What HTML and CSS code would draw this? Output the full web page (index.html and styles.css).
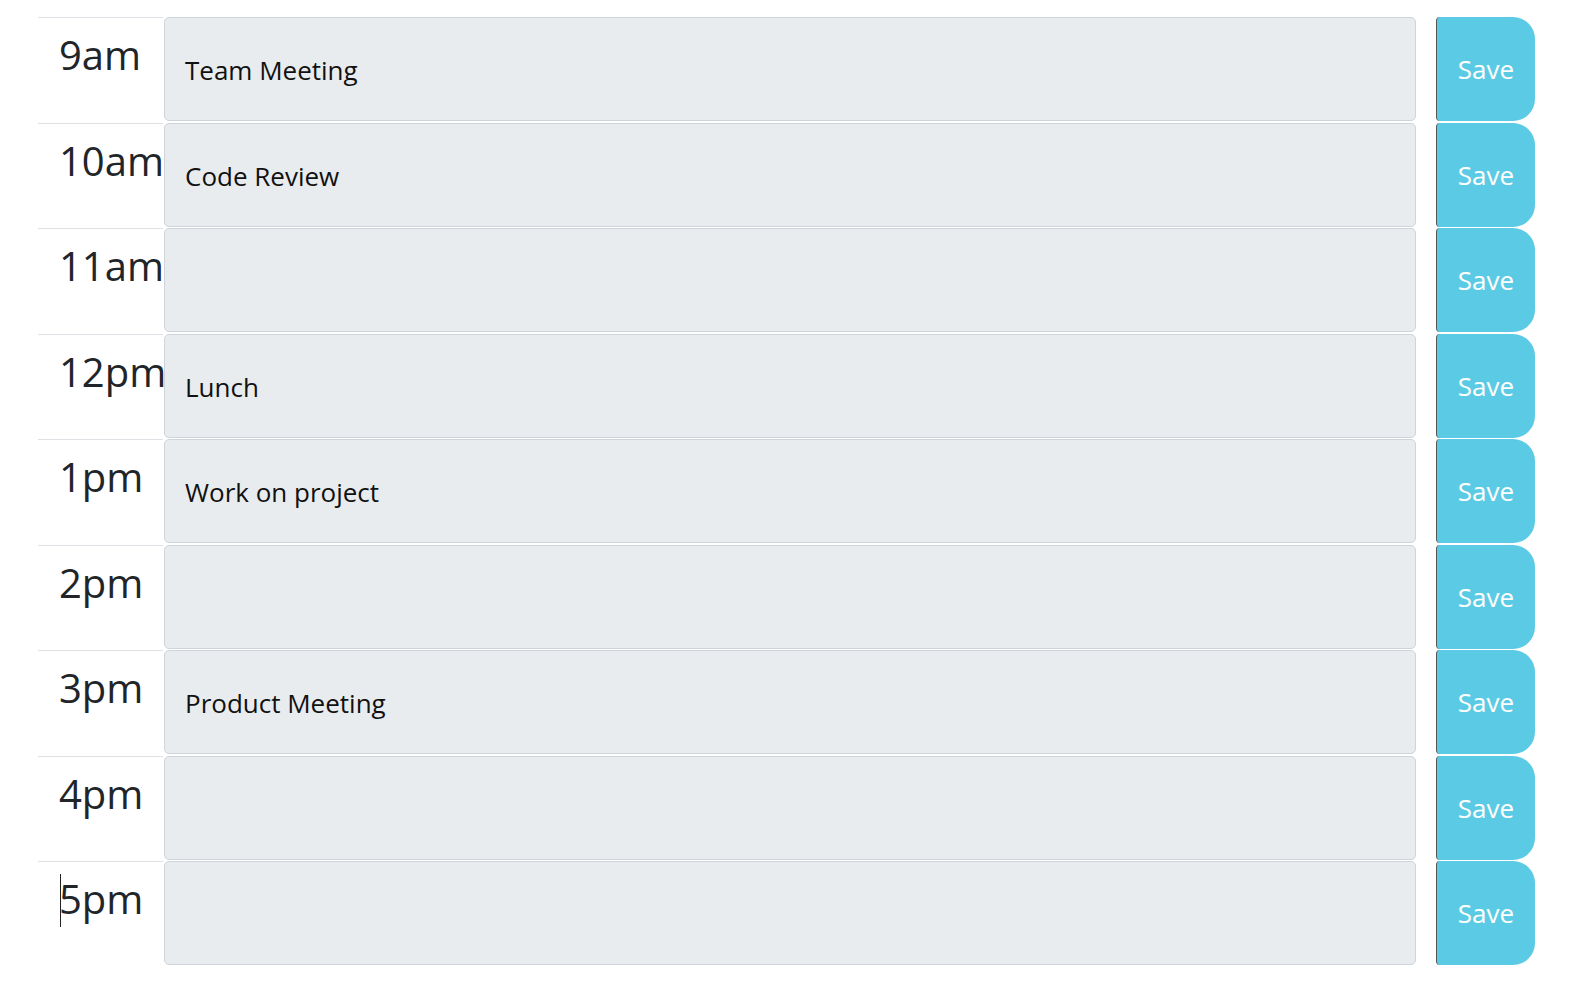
FILE: index.html
```html
<!DOCTYPE html>
<html>
<head>
<meta charset="utf-8">
<link rel="stylesheet" href="styles.css">
</head>
<body>
<div class="planner">
  <div class="row"><div class="hour">9am</div><div class="event">Team Meeting</div><button class="save">Save</button></div>
  <div class="row"><div class="hour">10am</div><div class="event">Code Review</div><button class="save">Save</button></div>
  <div class="row"><div class="hour">11am</div><div class="event"></div><button class="save">Save</button></div>
  <div class="row"><div class="hour">12pm</div><div class="event">Lunch</div><button class="save">Save</button></div>
  <div class="row"><div class="hour">1pm</div><div class="event">Work on project</div><button class="save">Save</button></div>
  <div class="row"><div class="hour">2pm</div><div class="event"></div><button class="save">Save</button></div>
  <div class="row"><div class="hour">3pm</div><div class="event">Product Meeting</div><button class="save">Save</button></div>
  <div class="row"><div class="hour">4pm</div><div class="event"></div><button class="save">Save</button></div>
  <div class="row"><div class="hour"><span class="caret"></span>5pm</div><div class="event"></div><button class="save">Save</button></div>
</div>
</body>
</html>
```
FILE: styles.css
```css
html, body {
  margin: 0;
  padding: 0;
  background: #fff;
}
body {
  font-family: "Open Sans", "Noto Sans", sans-serif;
  color: #212529;
}
.planner {
  padding: 17px 58px 0 38px;
}
.row {
  display: flex;
  height: 105.5px;
}
.hour {
  width: 125px;
  flex: none;
  border-top: 1px solid #dee2e6;
  box-sizing: border-box;
  font-size: 40px;
  line-height: 1;
  padding: 17px 0 0 21px;
  position: relative;
  white-space: nowrap;
}
.caret {
  position: absolute;
  left: 22px;
  top: 12px;
  width: 1px;
  height: 53px;
  background: #222;
}
.event {
  flex: 1;
  margin: 0 0 1.5px 1px;
  background: #e9ecef;
  border: 1px solid #ced4da;
  border-radius: 5px;
  box-sizing: border-box;
  font-size: 26px;
  line-height: 36px;
  padding: 34px 20px 0 20px;
  color: #111;
}
.save {
  flex: none;
  width: 99px;
  margin: 0 0 1.5px 20px;
  background: #5bcbe5;
  border: none;
  border-left: 1px solid #555;
  border-radius: 4px 22px 22px 4px;
  color: #fff;
  font-family: "Open Sans", "Noto Sans", sans-serif;
  font-size: 26px;
  padding: 0;
}
```
